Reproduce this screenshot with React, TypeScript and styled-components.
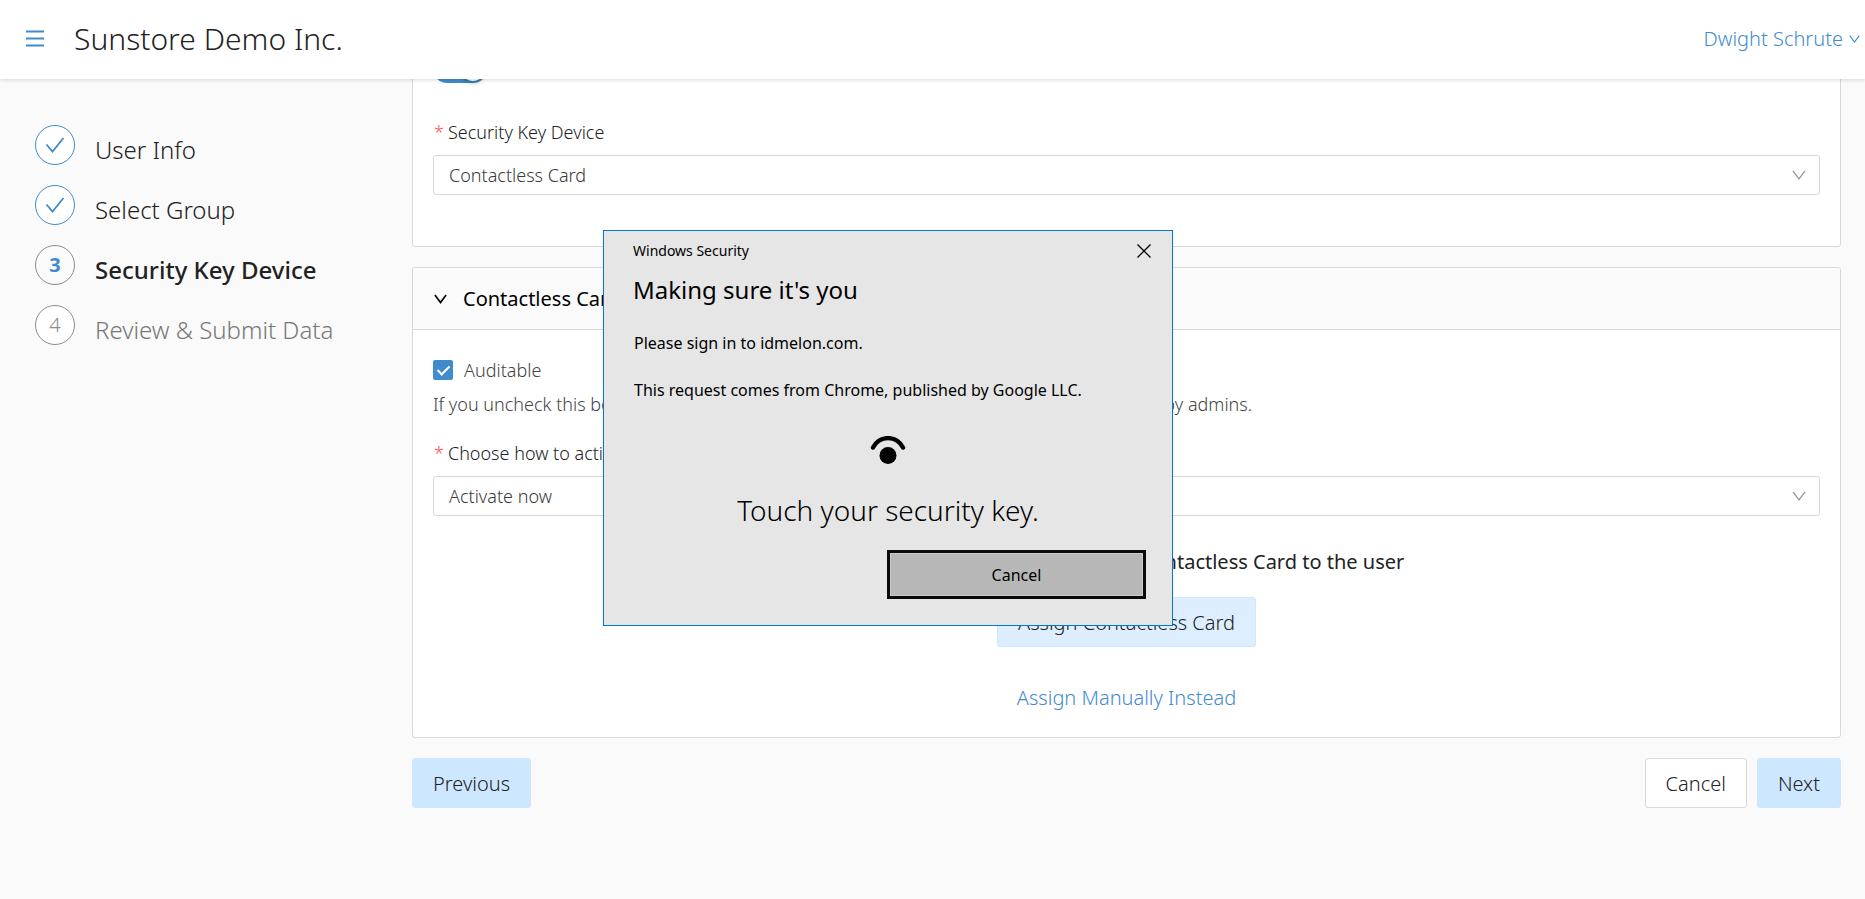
import React from 'react';
import styled, { createGlobalStyle } from 'styled-components';

const BLUE = '#3f8bce';
const LINE = '#d9d9d9';

const GlobalStyle = createGlobalStyle`
  *, *::before, *::after { box-sizing: border-box; }
  body {
    margin: 0;
    background: #fafafa;
    color: #222;
    font-family: "Noto Sans", "Open Sans", sans-serif;
    font-size: 18px;
    font-weight: 300;
    line-height: 28px;
  }
  h1, h2, h3, p, ol { margin: 0; padding: 0; }
  button, select, input { font: inherit; color: inherit; }
`;

const Page = styled.div`
  display: flex;
  flex-direction: column;
  height: 100vh;
`;

const Header = styled.header`
  display: flex;
  align-items: center;
  flex: none;
  height: 79px;
  padding: 0 5px 2px 20px;
  background: #fff;
  box-shadow: 0 1px 4px rgba(0, 0, 0, 0.15);
  z-index: 1;
`;

const MenuButton = styled.button`
  display: flex;
  padding: 6px;
  border: 0;
  background: none;
  color: ${BLUE};
`;

const Brand = styled.h1`
  flex: 1;
  margin-left: 24px;
  font-size: 30px;
  font-weight: 300;
  line-height: 40px;
`;

const UserLink = styled.a`
  display: flex;
  align-items: center;
  gap: 6px;
  color: ${BLUE};
  font-size: 20px;
  font-weight: 300;
  text-decoration: none;
`;

const Main = styled.main`
  display: flex;
  flex: 1;
  min-height: 0;
  overflow: hidden;
  padding-right: 24px;
`;

const Steps = styled.ol`
  display: flex;
  flex-direction: column;
  flex: none;
  gap: 15px;
  width: 412px;
  padding: 46px 0 0 35px;
  list-style: none;
`;

type StepState = 'done' | 'current' | 'next';

const Step = styled.li`
  display: flex;
  gap: 20px;
`;

const StepMark = styled.span<{ $state: StepState }>`
  display: flex;
  align-items: center;
  justify-content: center;
  width: 40px;
  height: 40px;
  border: 1px solid ${p => (p.$state === 'done' ? BLUE : '#8c8c8c')};
  border-radius: 50%;
  background: ${p => (p.$state === 'current' ? '#fafafa' : '#fff')};
  color: ${p => (p.$state === 'next' ? '#8c8c8c' : BLUE)};
  font-size: 20px;
  font-weight: ${p => (p.$state === 'current' ? 700 : 300)};
`;

const StepTitle = styled.span<{ $state: StepState }>`
  padding-top: 5px;
  font-size: 24px;
  line-height: 40px;
  color: ${p => (p.$state === 'next' ? '#777' : '#222')};
  font-weight: ${p => (p.$state === 'current' ? 500 : 300)};
`;

const Form = styled.form`
  display: flex;
  flex-direction: column;
  flex: 1;
  gap: 20px;
  min-width: 0;
  margin-top: -60px;
`;

const Panel = styled.section`
  flex: none;
  border: 1px solid ${LINE};
  border-radius: 3px;
  background: #fff;
`;

const PanelHeader = styled.h2`
  display: flex;
  align-items: center;
  gap: 16px;
  height: 62px;
  padding: 0 20px 0 21px;
  border-bottom: 1px solid ${LINE};
  border-radius: 3px 3px 0 0;
  background: #fafafa;
  color: #000;
  font-size: 20px;
  font-weight: 400;
`;

const PanelBody = styled.div<{ $top: number; $bottom: number }>`
  display: flex;
  flex-direction: column;
  padding: ${p => p.$top}px 20px ${p => p.$bottom}px;
`;

const Switch = styled.input`
  appearance: none;
  display: flex;
  width: 54px;
  height: 28px;
  margin: 0 0 35px;
  padding: 2px;
  border-radius: 14px;
  background: ${BLUE};
  &::after {
    content: "";
    width: 24px;
    height: 24px;
    margin-left: auto;
    border-radius: 50%;
    background: #fff;
    box-shadow: 0 2px 4px rgba(0, 35, 11, 0.3);
  }
`;

const Field = styled.div`
  display: flex;
  flex-direction: column;
  gap: 9px;
`;

const FieldLabel = styled.label`
  &::before {
    content: "*";
    margin: 0 4px 0 1px;
    color: #ff4d4f;
  }
`;

const SelectBox = styled.div`
  position: relative;
  color: #999;
  > svg {
    position: absolute;
    top: 15px;
    right: 14px;
    pointer-events: none;
  }
`;

const Select = styled.select`
  appearance: none;
  display: block;
  width: 100%;
  height: 40px;
  padding: 0 40px 0 15px;
  border: 1px solid ${LINE};
  border-radius: 3px;
  background: #fff;
  color: #3a3a3a;
`;

const CheckLabel = styled.label`
  display: flex;
  align-items: center;
  gap: 11px;
  color: #444;
`;

const Checkbox = styled.input`
  appearance: none;
  display: grid;
  place-items: center;
  width: 20px;
  height: 20px;
  margin: 0;
  border-radius: 2px;
  background: ${BLUE};
  &::after {
    content: "";
    width: 7px;
    height: 12px;
    margin-bottom: 3px;
    border: solid #fff;
    border-width: 0 2px 2px 0;
    transform: rotate(45deg);
  }
`;

const Note = styled.p`
  margin: 6px 0 21px;
  color: #444;
`;

const Assign = styled.div`
  display: flex;
  flex-direction: column;
  align-items: center;
  margin-top: 32px;
  font-size: 20px;
`;

const AssignTitle = styled.h3`
  margin-bottom: 21px;
  font-size: 20px;
  font-weight: 400;
`;

const Button = styled.button<{ $kind: 'primary' | 'plain' | 'soft' }>`
  height: 50px;
  padding: 2px 20px 0;
  border: 1px solid ${p => (p.$kind === 'plain' ? LINE : '#cde7ff')};
  border-radius: 3px;
  background: ${p => ({ primary: '#cde7ff', plain: '#fff', soft: '#dceeff' })[p.$kind]};
  color: #222;
  font-size: 20px;
`;

const TextLink = styled.a`
  margin-top: 37px;
  color: ${BLUE};
  text-decoration: none;
`;

const Actions = styled.div`
  display: flex;
  gap: 10px;
  > :first-child { margin-right: auto; }
`;

const Dialog = styled.div`
  position: fixed;
  top: 230px;
  left: 603px;
  z-index: 2;
  display: flex;
  flex-direction: column;
  width: 570px;
  padding: 10px 26px 26px;
  border: 1px solid #0078d7;
  background: #e6e6e6;
  color: #000;
  font-size: 16px;
  font-weight: 400;
  line-height: 24px;
`;

const DialogBar = styled.div`
  display: flex;
  align-items: center;
  justify-content: space-between;
  margin: 0 -12px 0 3px;
  font-size: 14px;
  line-height: 20px;
`;

const CloseButton = styled.button`
  display: flex;
  padding: 0 7px;
  border: 0;
  background: none;
`;

const DialogTitle = styled.h2`
  margin: 13px 3px 2px;
  font-size: 24px;
  font-weight: 400;
  line-height: 32px;
`;

const DialogText = styled.p`
  margin: 23px 4px 0;
`;

const TouchPrompt = styled.div`
  display: flex;
  flex-direction: column;
  align-items: center;
  gap: 26px;
  margin: 34px 0 20px;
  font-size: 28px;
  font-weight: 300;
  line-height: 40px;
`;

const DialogButton = styled.button`
  align-self: flex-end;
  width: 259px;
  height: 49px;
  border: 3px solid #0a0a0a;
  background: #b7b7b7;
  box-shadow: inset 0 0 0 1px #cacaca;
`;

const Chevron = ({ width = 14, height = 10, stroke = 1.4 }) => (
  <svg width={width} height={height} viewBox="0 0 14 10" fill="none" stroke="currentColor" strokeWidth={stroke} aria-hidden="true">
    <path d="M1 .8 7 8.8 13 .8" />
  </svg>
);

const StepCheck = () => (
  <svg width="20" height="18" viewBox="0 0 20 18" fill="none" stroke="currentColor" strokeWidth="1.8" aria-hidden="true">
    <path d="M1.5 8.5 7.5 15.5 18.5 2" />
  </svg>
);

const steps: { title: string; state: StepState }[] = [
  { title: 'User Info', state: 'done' },
  { title: 'Select Group', state: 'done' },
  { title: 'Security Key Device', state: 'current' },
  { title: 'Review & Submit Data', state: 'next' },
];

export default function App() {
  return (
    <Page>
      <GlobalStyle />
      <Header>
        <MenuButton aria-label="Menu">
          <svg width="18" height="17" viewBox="0 0 18 17" fill="none" stroke="currentColor" strokeWidth="2">
            <path d="M0 1.5h18M0 8.5h18M0 15.5h18" />
          </svg>
        </MenuButton>
        <Brand>Sunstore Demo Inc.</Brand>
        <UserLink href="#account">
          Dwight Schrute
          <Chevron width={11} height={8} stroke={1.5} />
        </UserLink>
      </Header>

      <Main>
        <Steps>
          {steps.map((s, i) => (
            <Step key={s.title}>
              <StepMark $state={s.state}>{s.state === 'done' ? <StepCheck /> : i + 1}</StepMark>
              <StepTitle $state={s.state}>{s.title}</StepTitle>
            </Step>
          ))}
        </Steps>

        <Form onSubmit={e => e.preventDefault()}>
          <Panel>
            <PanelBody $top={35} $bottom={51}>
              <Switch type="checkbox" role="switch" aria-label="Assign security key" defaultChecked />
              <Field>
                <FieldLabel htmlFor="device">Security Key Device</FieldLabel>
                <SelectBox>
                  <Select id="device">
                    <option>Contactless Card</option>
                  </Select>
                  <Chevron />
                </SelectBox>
              </Field>
            </PanelBody>
          </Panel>

          <Panel>
            <PanelHeader>
              <Chevron width={13} height={10} stroke={1.8} />
              Contactless Card
            </PanelHeader>
            <PanelBody $top={26} $bottom={25}>
              <CheckLabel>
                <Checkbox type="checkbox" defaultChecked />
                Auditable
              </CheckLabel>
              <Note>If you uncheck this box, then the activities of this security key will not be visible or audited by admins.</Note>
              <Field>
                <FieldLabel htmlFor="activation">Choose how to activate</FieldLabel>
                <SelectBox>
                  <Select id="activation">
                    <option>Activate now</option>
                  </Select>
                  <Chevron />
                </SelectBox>
              </Field>
              <Assign>
                <AssignTitle>Tap a button below to assign a Contactless Card to the user</AssignTitle>
                <Button type="button" $kind="soft">Assign Contactless Card</Button>
                <TextLink href="#manual">Assign Manually Instead</TextLink>
              </Assign>
            </PanelBody>
          </Panel>

          <Actions>
            <Button type="button" $kind="primary">Previous</Button>
            <Button type="button" $kind="plain">Cancel</Button>
            <Button type="submit" $kind="primary">Next</Button>
          </Actions>
        </Form>
      </Main>

      <Dialog role="dialog" aria-labelledby="dialog-title">
        <DialogBar>
          Windows Security
          <CloseButton aria-label="Close">
            <svg width="14" height="14" viewBox="0 0 14 14" stroke="currentColor" strokeWidth="1.3">
              <path d="M.5 .5 13.5 13.5M13.5 .5 .5 13.5" />
            </svg>
          </CloseButton>
        </DialogBar>
        <DialogTitle id="dialog-title">Making sure it's you</DialogTitle>
        <DialogText>Please sign in to idmelon.com.</DialogText>
        <DialogText>This request comes from Chrome, published by Google LLC.</DialogText>
        <TouchPrompt>
          <svg width="36" height="28" viewBox="0 0 36 28" aria-hidden="true">
            <path d="M3 11.5C10 -1 26 -1 33 11.5" fill="none" stroke="#000" strokeWidth="4.4" strokeLinecap="round" />
            <circle cx="18" cy="19.5" r="8.5" />
          </svg>
          <p>Touch your security key.</p>
        </TouchPrompt>
        <DialogButton type="button">Cancel</DialogButton>
      </Dialog>
    </Page>
  );
}
